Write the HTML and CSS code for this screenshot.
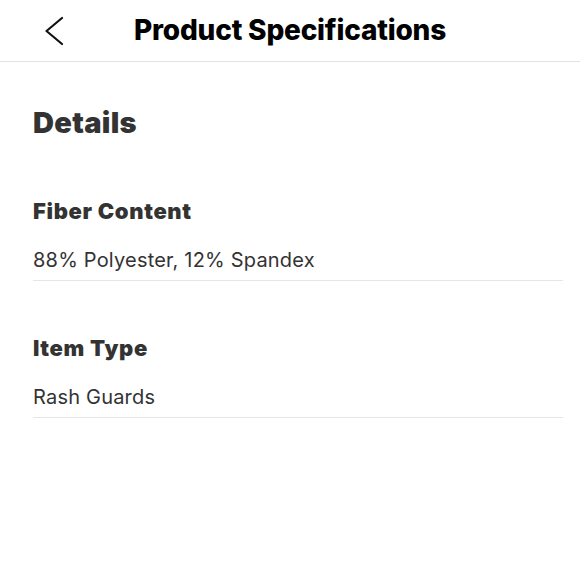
FILE: index.html
```html
<!DOCTYPE html>
<html lang="en">
<head>
<meta charset="utf-8">
<title>Product Specifications</title>
<link rel="stylesheet" href="styles.css">
</head>
<body>
<header class="topbar">
  <button class="back" aria-label="Back">
    <svg class="back-icon" width="20" height="30" viewBox="0 0 20 30" aria-hidden="true">
      <polyline points="17,2 1.5,15 17,28" fill="none" stroke="#111" stroke-width="2.2" stroke-linecap="round" stroke-linejoin="round"/>
    </svg>
  </button>
  <h1 class="title">Product Specifications</h1>
  <span class="spacer"></span>
</header>
<main class="content">
  <h2 class="section-title">Details</h2>
  <div class="spec">
    <h3 class="spec-label">Fiber Content</h3>
    <p class="spec-value">88% Polyester, 12% Spandex</p>
  </div>
  <div class="spec">
    <h3 class="spec-label">Item Type</h3>
    <p class="spec-value">Rash Guards</p>
  </div>
</main>
</body>
</html>
```

FILE: styles.css
```css
* { box-sizing: border-box; }
html, body { margin: 0; padding: 0; background: #fff; }
body {
  font-family: Inter, "Noto Sans", "Liberation Sans", sans-serif;
  color: #333;
}
.topbar {
  display: grid;
  grid-template-columns: 1fr auto 1fr;
  align-items: center;
  height: 62px;
  border-bottom: 1px solid #e3e3e3;
}
.back {
  justify-self: start;
  display: flex;
  align-items: center;
  background: none;
  border: 0;
  padding: 0 0 0 45px;
  margin: 0;
  height: 61px;
  cursor: pointer;
}
.back-icon { display: block; margin-top: 1px; }
.title {
  margin: 0;
  font-size: 28px;
  line-height: 61px;
  font-weight: 800;
  color: #000;
  letter-spacing: -0.2px;
}
.content {
  padding: 0 17px 0 33px;
}
.section-title {
  margin: 44px 0 0;
  font-size: 29px;
  line-height: 34px;
  font-weight: 900;
  color: #333;
  letter-spacing: 0.3px;
}
.spec {
  border-bottom: 1px solid #e6e6e6;
  padding-bottom: 8px;
  margin-top: 54px;
}
.section-title + .spec { margin-top: 58px; }
.spec-label {
  margin: 0;
  font-size: 22px;
  line-height: 26px;
  font-weight: 900;
  color: #333;
  letter-spacing: 0.65px;
}
.spec-value {
  margin: 24px 0 0;
  font-size: 20px;
  line-height: 24px;
  font-weight: 400;
  color: #333;
  letter-spacing: 0.2px;
}
```
